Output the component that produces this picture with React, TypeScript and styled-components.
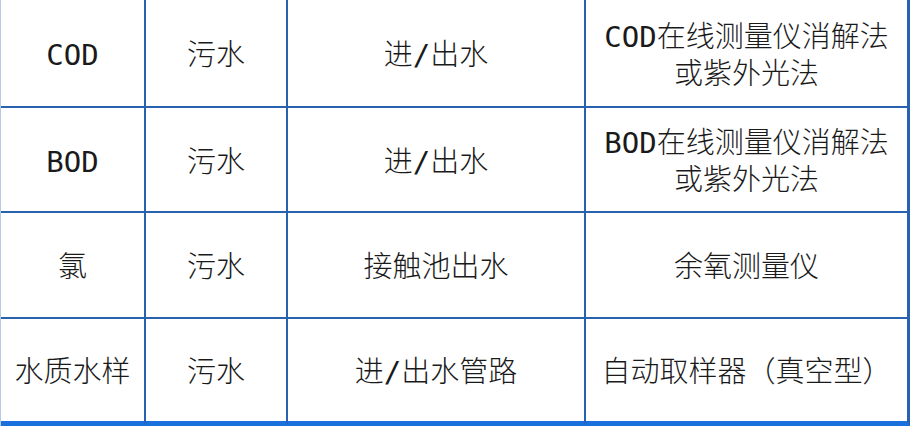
import React from "react";
import styled, { createGlobalStyle } from "styled-components";

const GlobalStyle = createGlobalStyle`
    html, body {
        margin: 0;
        padding: 0;
        background: #ffffff;
        overflow: hidden;
    }
`;

const rows: string[][] = [
    ["COD", "污水", "进/出水", "COD在线测量仪消解法\n或紫外光法"],
    ["BOD", "污水", "进/出水", "BOD在线测量仪消解法\n或紫外光法"],
    ["氯", "污水", "接触池出水", "余氧测量仪"],
    ["水质水样", "污水", "进/出水管路", "自动取样器（真空型）"],
];

export default function App() {
    return (
        <>
            <GlobalStyle />
            <Table>
                {rows.map((row, r) =>
                    row.map((text, c) => (
                        <Cell
                            key={`${r}-${c}`}
                            $lastRow={r === rows.length - 1}
                            $lastCol={c === row.length - 1}
                        >
                            {text.split("\n").map((line, i) => (
                                <Line key={i}>{line}</Line>
                            ))}
                        </Cell>
                    ))
                )}
            </Table>
        </>
    );
}

const Table = styled.div`
    width: 910px;
    height: 426px;

    display: grid;
    grid-template-columns: 145px 142px 298px 324px;
    grid-template-rows: 108px 105px 106px 107px;

    border-left: 1px solid #b4cbe4;
    background: #ffffff;
`;

const Cell = styled.div<{ $lastRow: boolean; $lastCol: boolean }>`
    box-sizing: border-box;

    display: flex;
    flex-direction: column;
    justify-content: center;
    align-items: center;
    padding-top: 5px;

    border-right: ${(p) => (p.$lastCol ? "3px" : "2px")} solid #2862ae;
    border-bottom: ${(p) => (p.$lastRow ? "5px solid #1a70dc" : "2px solid #2862ae")};

    color: #1a1a1a;
    font-family: "DejaVu Sans Mono", "Noto Sans CJK SC", monospace;
    font-size: 29px;
    font-weight: 300;
    line-height: 37px;
    text-align: center;
`;

const Line = styled.div`
    white-space: nowrap;
`;
